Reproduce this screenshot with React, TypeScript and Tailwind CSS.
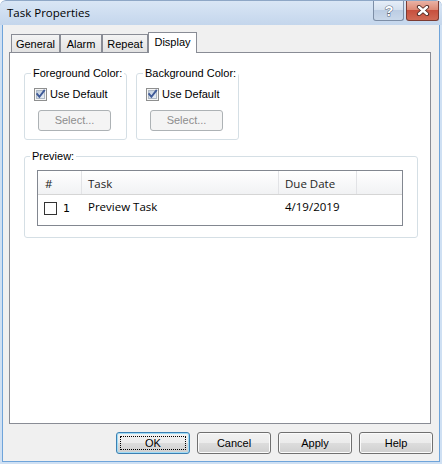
import React, { useId } from "react";

// Vista-style checked box used by the colour group boxes
function VistaCheckbox() {
  const id = useId().replace(/:/g, "");
  return (
    <svg width="13" height="13" viewBox="0 0 13 13" className="shrink-0">
      <defs>
        <linearGradient id={`f${id}`} x1="0" y1="0" x2="1" y2="1">
          <stop offset="0" stopColor="#bccadb" />
          <stop offset="1" stopColor="#eef2f7" />
        </linearGradient>
      </defs>
      <rect x="0.5" y="0.5" width="12" height="12" fill="#f6f6f6" stroke="#8e8f8f" />
      <rect x="2.5" y="2.5" width="8" height="8" fill={`url(#f${id})`} stroke="#aeb8c4" />
      <path d="M3.2 6.2 L5.4 8.8 L10.2 2.6" stroke="#3f5a98" strokeWidth="1.9" fill="none" strokeLinecap="square" />
    </svg>
  );
}

function PushButton({ label, primary = false }: { label: string; primary?: boolean }) {
  return (
    <div
      className={`relative w-[74px] h-[22px] rounded-[3px] border flex items-center justify-center bg-[linear-gradient(#f2f2f2_0%,#ebebeb_50%,#dddddd_50%,#cfcfcf_100%)] ${
        primary
          ? "border-[#3c7fb1] shadow-[inset_0_0_0_1px_#9fdcf7]"
          : "border-[#707070] shadow-[inset_0_0_0_1px_#fbfbfb]"
      }`}
    >
      <span className="leading-[13px]">{label}</span>
      {primary && <span className="absolute inset-[3px] border border-dotted border-black rounded-[1px]" />}
    </div>
  );
}

function DisabledButton({ label }: { label: string }) {
  return (
    <div className="w-[73px] h-[21px] rounded-[3px] border border-[#adb2b5] bg-[#f4f4f4] flex items-center justify-center text-[#8d8d8d]">
      {label}
    </div>
  );
}

function ColorGroup({ title, width }: { title: string; width: string }) {
  return (
    <fieldset className={`${width} border border-[#d5dfe5] rounded-[3px]`}>
      <legend className="ml-[6px] px-[2px] leading-[13px] whitespace-nowrap">{title}</legend>
      <div className="pt-[8px] pb-[8px] pl-[9px] flex flex-col">
        <div className="flex items-center gap-[3px] h-[13px]">
          <VistaCheckbox />
          <span className="leading-[13px] whitespace-nowrap">Use Default</span>
        </div>
        <div className="mt-[9px] ml-[4px]">
          <DisabledButton label="Select..." />
        </div>
      </div>
    </fieldset>
  );
}

function Tab({ label, width, active = false }: { label: string; width: string; active?: boolean }) {
  return (
    <div
      className={`${width} border border-b-0 border-[#898c95] flex justify-center pt-[3px] leading-[13px] ${
        active
          ? "h-[21px] bg-white -mb-px relative z-10"
          : "h-[18px] bg-[linear-gradient(#f4f4f4,#e2e2e2)]"
      }`}
    >
      {label}
    </div>
  );
}

export default function App() {
  return (
    <div className="w-[442px] h-[464px] flex flex-col bg-[#cfe0f3] rounded-t-[6px] overflow-hidden font-['Liberation_Sans',Arial,sans-serif] text-[11px] text-black select-none">
      {/* caption bar */}
      <div className="h-[25px] shrink-0 flex items-start justify-between pl-[7px] pr-[3px] bg-[linear-gradient(#d9e6f5,#c4d6ec)] border-t border-[#8ea7c6] rounded-t-[6px]">
        <span className="leading-[24px] font-['Open_Sans',sans-serif] text-[11.5px] text-black">Task Properties</span>
        <div className="flex gap-[2px]">
          <div className="w-[31px] h-[20px] rounded-b-[3px] border border-t-0 border-[#7d8ea6] bg-[linear-gradient(#e6eef8_0%,#d3dfee_50%,#bccde3_50%,#c9d8ea_100%)] flex items-center justify-center">
            <svg width="12" height="14" viewBox="0 0 12 14">
              <text
                x="6"
                y="12"
                textAnchor="middle"
                fontFamily="Liberation Sans, Arial, sans-serif"
                fontWeight="bold"
                fontSize="14"
                fill="#ffffff"
                stroke="#5a6a80"
                strokeWidth="1"
                paintOrder="stroke"
              >
                ?
              </text>
            </svg>
          </div>
          <div className="w-[33px] h-[20px] rounded-b-[3px] border border-t-0 border-[#7b3b32] bg-[linear-gradient(#e9b2a5_0%,#dd8a76_45%,#c7503e_50%,#d06a55_100%)] flex items-center justify-center">
            <svg width="14" height="11" viewBox="0 0 14 11">
              <path d="M3 2 L11 9 M11 2 L3 9" stroke="#4b2722" strokeWidth="4.2" strokeLinecap="round" fill="none" />
              <path d="M3 2 L11 9 M11 2 L3 9" stroke="#ffffff" strokeWidth="2.4" strokeLinecap="round" fill="none" />
            </svg>
          </div>
        </div>
      </div>

      {/* client area */}
      <div className="flex-1 mx-[2px] mb-[2px] border-x border-b border-[#6fa4da] bg-[#f0f0f0] flex flex-col">
        <div className="mt-[7px] pl-[8px] h-[20px] flex items-end">
          <Tab label="General" width="w-[49px]" />
          <Tab label="Alarm" width="w-[42px]" />
          <Tab label="Repeat" width="w-[46px]" />
          <Tab label="Display" width="w-[49px]" active />
        </div>

        <div className="ml-[6px] mr-[8px] h-[372px] border border-[#898c95] bg-white pt-[14px] pl-[14px] flex flex-col">
          <div className="flex gap-[9px]">
            <ColorGroup title="Foreground Color:" width="w-[103px]" />
            <ColorGroup title="Background Color:" width="w-[102px]" />
          </div>

          <fieldset className="mt-[10px] w-[394px] border border-[#d5dfe5] rounded-[3px]">
            <legend className="ml-[5px] px-[2px] leading-[13px]">Preview:</legend>
            <div className="pt-[7px] pb-[11px] pl-[12px]">
              <div className="w-[366px] h-[56px] border border-[#828790] bg-white font-['Open_Sans',sans-serif] text-[11.5px]">
                <div className="h-[24px] border-b border-[#d5d5d5] bg-[linear-gradient(#ffffff,#f1f2f4)] grid grid-cols-[44px_197px_78px_1fr] leading-[16px] text-[#1e1e1e]">
                  <div className="border-r border-[#e2e3e6] pl-[7px] pt-[5px]">#</div>
                  <div className="border-r border-[#e2e3e6] pl-[6px] pt-[5px]">Task</div>
                  <div className="border-r border-[#e2e3e6] pl-[6px] pt-[5px]">Due Date</div>
                  <div />
                </div>
                <div className="grid grid-cols-[44px_197px_78px_1fr] leading-[16px] pt-[4px]">
                  <div className="flex items-start pl-[6px] gap-[6px]">
                    <span className="w-[13px] h-[13px] border border-[#333333] bg-white mt-[3px]" />
                    <span className="font-['DejaVu_Sans',sans-serif] text-[11px] leading-[16px] mt-[2px]">1</span>
                  </div>
                  <div className="pl-[6px]">Preview Task</div>
                  <div className="pl-[6px]">4/19/2019</div>
                  <div />
                </div>
              </div>
            </div>
          </fieldset>
        </div>

        <div className="mt-[8px] pr-[6px] flex justify-end gap-[7px]">
          <PushButton label="OK" primary />
          <PushButton label="Cancel" />
          <PushButton label="Apply" />
          <PushButton label="Help" />
        </div>
      </div>
    </div>
  );
}
